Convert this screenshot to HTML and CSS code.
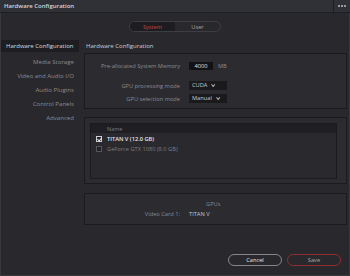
FILE: index.html
```html
<!DOCTYPE html>
<html lang="en">
<head>
    <meta charset="UTF-8">
    <title>Hardware Configuration</title>
    <link rel="stylesheet" href="styles.css">
</head>
<body>
    <div class="window">
        <header class="titlebar">
            <span class="title">Hardware Configuration</span>
            <span class="more"><i></i><i></i><i></i></span>
        </header>

        <div class="tabs">
            <div class="toggle">
                <span class="tab active">System</span>
                <span class="tab">User</span>
            </div>
        </div>

        <div class="main">
            <nav class="sidebar">
                <div class="nav-item selected">Hardware Configuration</div>
                <div class="nav-item">Media Storage</div>
                <div class="nav-item">Video and Audio I/O</div>
                <div class="nav-item">Audio Plugins</div>
                <div class="nav-item">Control Panels</div>
                <div class="nav-item">Advanced</div>
            </nav>

            <section class="content">
                <h2 class="heading">Hardware Configuration</h2>

                <div class="panel settings">
                    <div class="row">
                        <span class="label">Pre-allocated System Memory</span>
                        <span class="field"><span class="input">4000</span><span class="unit">MB</span></span>
                    </div>
                    <div class="row gap-top">
                        <span class="label">GPU processing mode</span>
                        <span class="field"><span class="select">CUDA <b class="chev"></b></span></span>
                    </div>
                    <div class="row">
                        <span class="label">GPU selection mode</span>
                        <span class="field"><span class="select">Manual <b class="chev"></b></span></span>
                    </div>
                </div>

                <div class="panel gpu-list">
                    <div class="table">
                        <div class="thead"><span class="cell-check"></span><span>Name</span></div>
                        <div class="trow on"><span class="cell-check"><span class="check checked"></span></span><span>TITAN V (12.0 GB)</span></div>
                        <div class="trow"><span class="cell-check"><span class="check"></span></span><span>GeForce GTX 1080 (8.0 GB)</span></div>
                    </div>
                </div>

                <div class="panel gpus">
                    <div class="gpus-title">GPUs</div>
                    <div class="row">
                        <span class="label">Video Card 1:</span>
                        <span class="field value">TITAN V</span>
                    </div>
                </div>
            </section>
        </div>

        <footer class="footer">
            <button class="btn cancel">Cancel</button>
            <button class="btn save">Save</button>
        </footer>
    </div>
</body>
</html>
```

FILE: styles.css
```css
* {
    margin: 0;
    padding: 0;
    box-sizing: border-box;
}

body {
    font-family: 'Open Sans', 'Liberation Sans', sans-serif;
    font-size: 5.7px;
    background: #28282d;
    color: #8f8f93;
    white-space: nowrap;
}

.window {
    width: 350px;
    height: 276px;
    border: 1px solid #38383d;
    border-top: none;
    display: flex;
    flex-direction: column;
    background: #28282d;
}

.titlebar {
    height: 13px;
    display: flex;
    align-items: center;
    background: #303136;
    border-bottom: 1px solid #1e1e22;
    margin: 0 -1px;
}

.title {
    flex: 1;
    padding-left: 4px;
    color: #d6d6d8;
    font-weight: 600;
    font-size: 6px;
}

.more {
    width: 17px;
    height: 100%;
    border-left: 1px solid #1e1e22;
    display: flex;
    align-items: center;
    justify-content: center;
    gap: 1px;
}

.more i {
    width: 2px;
    height: 2px;
    background: #9a9a9e;
}

.tabs {
    display: flex;
    justify-content: center;
    padding-top: 8px;
}

.toggle {
    width: 92px;
    height: 11px;
    display: flex;
    border: 1px solid #3d3e43;
    border-radius: 6px;
    overflow: hidden;
}

.tab {
    flex: 1;
    display: flex;
    align-items: center;
    justify-content: center;
    color: #a8a8ac;
}

.tab.active {
    background: #1d1d21;
    color: #c8403c;
}

.main {
    display: flex;
    padding-top: 8px;
    flex: 1;
}

.sidebar {
    width: 78px;
    flex-shrink: 0;
}

.nav-item {
    height: 14px;
    line-height: 14px;
    text-align: right;
    padding-right: 5px;
    color: #8c8c90;
    font-size: 6.1px;
}

.nav-item.selected {
    height: 12px;
    line-height: 12px;
    margin-bottom: 3px;
    text-align: left;
    padding-left: 5px;
    background: #1e1e22;
    color: #dcdcde;
    font-size: 6px;
}

.content {
    flex: 1;
    margin-left: 5px;
    margin-right: 2px;
}

.heading {
    font-size: 6px;
    font-weight: 400;
    color: #cfcfd2;
    height: 13px;
    line-height: 12px;
    padding-left: 2px;
}

.panel {
    background: #2b2b30;
    border: 1px solid #1b1b1f;
}

.settings {
    height: 56px;
    padding-top: 6px;
}

.row {
    display: grid;
    grid-template-columns: 95px 1fr;
    column-gap: 9px;
    align-items: center;
    height: 11px;
}

.row.gap-top {
    margin-top: 9px;
    margin-bottom: 2px;
}

.label {
    text-align: right;
    color: #8b8b8f;
}

.field {
    display: flex;
    align-items: center;
    gap: 5px;
}

.input {
    width: 24px;
    height: 8px;
    line-height: 8px;
    background: #121214;
    color: #e0e0e2;
    text-align: center;
}

.unit {
    color: #8b8b8f;
}

.select {
    width: 38px;
    height: 9px;
    line-height: 9px;
    background: #1a1a1d;
    color: #c8c8cb;
    padding-left: 3px;
    display: flex;
    align-items: center;
    gap: 4px;
}

.chev {
    width: 3px;
    height: 3px;
    border-right: 1px solid #b0b0b4;
    border-bottom: 1px solid #b0b0b4;
    transform: rotate(45deg) translateY(-1px);
}

.gpu-list {
    margin-top: 8px;
    height: 67px;
    padding: 5px 9px 4px 5px;
}

.table {
    height: 100%;
    border: 1px solid #1b1b1f;
    background: #29292e;
}

.thead,
.trow {
    display: flex;
    align-items: center;
}

.thead {
    height: 9px;
    background: #1f1f23;
    color: #7a7a7e;
    font-size: 5.5px;
}

.trow {
    height: 10px;
    color: #7f7f83;
}

.trow.on {
    margin-top: 1px;
    color: #e6e6e8;
    font-weight: 600;
}

.cell-check {
    width: 16px;
    display: flex;
    justify-content: center;
}

.check {
    width: 6px;
    height: 6px;
    border: 1px solid #55555a;
    background: #232327;
    position: relative;
}

.check.checked {
    border-color: #cfcfd2;
}

.check.checked::after {
    content: '';
    position: absolute;
    left: 1px;
    top: 0;
    width: 2px;
    height: 3px;
    border-right: 1px solid #e6e6e8;
    border-bottom: 1px solid #e6e6e8;
    transform: rotate(40deg);
}

.gpus {
    margin-top: 9px;
    height: 32px;
    padding-top: 5px;
}

.gpus-title {
    height: 10px;
    line-height: 10px;
    padding-left: 121px;
    color: #8b8b8f;
}

.gpus .row {
    height: 10px;
}

.value {
    color: #c8c8cb;
}

.footer {
    display: flex;
    justify-content: flex-end;
    gap: 5px;
    padding: 0 8px 9px 0;
}

.btn {
    width: 54px;
    height: 12px;
    border-radius: 6px;
    background: transparent;
    font-family: 'Open Sans', 'Liberation Sans', sans-serif;
    font-size: 5.7px;
    cursor: pointer;
}

.cancel {
    border: 1px solid #85858a;
    color: #e6e6e8;
}

.save {
    border: 1px solid #8e2e2e;
    color: #a8a8ac;
}
```
